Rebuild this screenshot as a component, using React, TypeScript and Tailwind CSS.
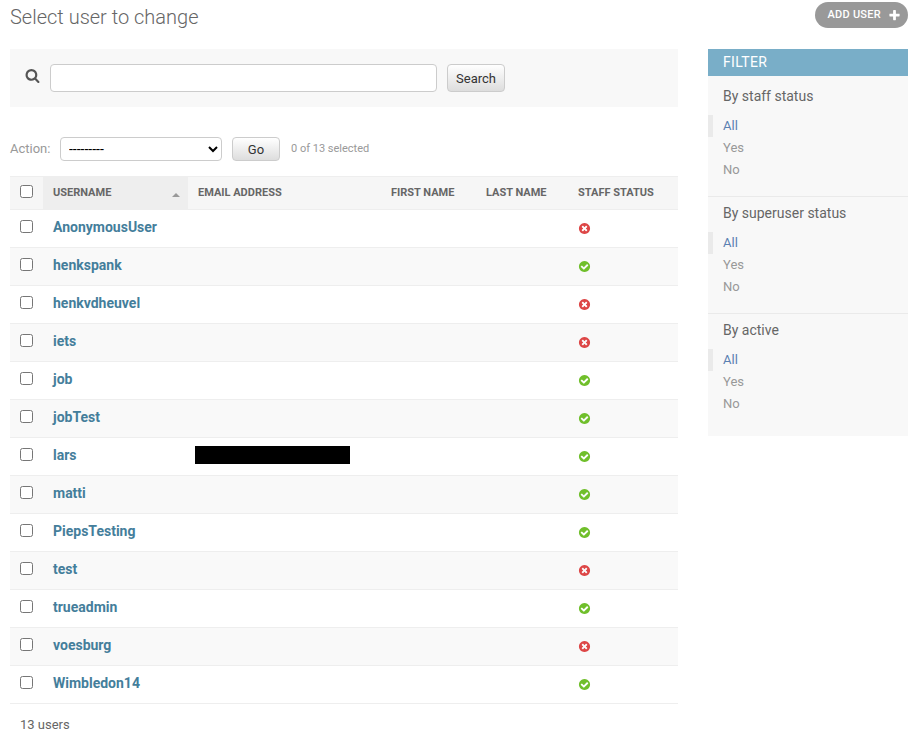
type User = { name: string; staff: boolean; redacted?: boolean };

const users: User[] = [
  { name: "AnonymousUser", staff: false },
  { name: "henkspank", staff: true },
  { name: "henkvdheuvel", staff: false },
  { name: "iets", staff: false },
  { name: "job", staff: true },
  { name: "jobTest", staff: true },
  { name: "lars", staff: true, redacted: true },
  { name: "matti", staff: true },
  { name: "PiepsTesting", staff: true },
  { name: "test", staff: false },
  { name: "trueadmin", staff: true },
  { name: "voesburg", staff: false },
  { name: "Wimbledon14", staff: true },
];

const filters = ["By staff status", "By superuser status", "By active"];
const choices = ["All", "Yes", "No"];

const DISC =
  "q0 209-103 385.5t-279.5 279.5-385.5 103-385.5-103-279.5-279.5-103-385.5 103-385.5 279.5-279.5 385.5-103 385.5 103 279.5 279.5 103 385.5z";
const YES =
  "M1412 734q0-28-18-46l-91-90q-19-19-45-19t-45 19l-408 407-226-226q-19-19-45-19t-45 19l-91 90q-18 18-18 46 0 27 18 45l362 362q19 19 45 19 27 0 46-19l543-543q18-18 18-45zm252 162" +
  DISC;
const NO =
  "M1277 1122q0-26-19-45l-181-181 181-181q19-19 19-45 0-27-19-46l-90-90q-19-19-46-19-26 0-45 19l-181 181-181-181q-19-19-45-19-27 0-46 19l-90 90q-19 19-19 46 0 26 19 45l181 181-181 181q-19 19-19 45 0 27 19 46l90 90q19 19 46 19 26 0 45-19l181-181 181 181q19 19 45 19 27 0 46-19l90-90q19-19 19-46zm387-226" +
  DISC;
const SEARCH =
  "M1216 832q0-185-131.5-316.5t-316.5-131.5-316.5 131.5-131.5 316.5 131.5 316.5 316.5 131.5 316.5-131.5 131.5-316.5zm512 832q0 52-38 90t-90 38q-54 0-90-38l-343-342q-179 124-399 124-143 0-273.5-55.5t-225-150-150-225-55.5-273.5 55.5-273.5 150-225 225-150 273.5-55.5 273.5 55.5 225 150 150 225 55.5 273.5q0 220-124 399l343 343q37 37 37 90z";
const PLUS =
  "M1600 736v192q0 40-28 68t-68 28h-416v416q0 40-28 68t-68 28h-192q-40 0-68-28t-28-68v-416h-416q-40 0-68-28t-28-68v-192q0-40 28-68t68-28h416v-416q0-40 28-68t68-28h192q40 0 68 28t28 68v416h416q40 0 68 28t28 68z";

function Icon({ path, className }: { path: string; className: string }) {
  return (
    <svg viewBox="0 0 1792 1792" fill="currentColor" className={className} aria-hidden="true">
      <path d={path} />
    </svg>
  );
}

const buttonClass =
  "rounded border border-[#ccc] bg-linear-to-b from-white to-[#ddd] pt-[2px] text-[13px] text-[#333]";
const thClass = "border-y border-[#eee] px-[10px] py-0 text-left font-bold whitespace-nowrap";
const tdClass = "h-[38px] border-b border-[#eee] px-[10px] py-0";

export default function App() {
  return (
    <div className="bg-white pr-2 pl-[10px] font-[Roboto,sans-serif] text-[13px] text-[#666]">
      <header className="flex items-start justify-between pt-[2px] pb-5">
        <h1 className="pt-1 text-[20px] leading-[23px] font-light">Select user to change</h1>
        <a
          href="#add"
          className="flex h-[26px] items-center gap-[7px] rounded-full bg-[#999] pr-[7px] pl-3 text-[11px] font-medium text-white"
        >
          <span className="tracking-wide">ADD USER</span>
          <Icon path={PLUS} className="size-[13px]" />
        </a>
      </header>

      <div className="flex items-start gap-[30px]">
        <main className="min-w-0 flex-1">
          <form
            className="flex h-[58px] items-center bg-[#f8f8f8] px-[15px]"
            onSubmit={(e) => e.preventDefault()}
          >
            <label htmlFor="searchbar" aria-label="Search users" className="mr-[10px] pb-[6px]">
              <Icon path={SEARCH} className="size-[15px] text-[#555]" />
            </label>
            <input
              id="searchbar"
              type="text"
              className="mr-[10px] h-7 w-[387px] rounded border border-[#ccc] bg-white px-[6px]"
            />
            <button type="submit" className={`${buttonClass} h-7 w-[58px]`}>
              Search
            </button>
          </form>

          <div className="flex items-center pt-[30px] pb-[15px]">
            <label htmlFor="action" className="w-[50px] text-[#999]">
              Action:
            </label>
            <select
              id="action"
              className="h-6 w-[162px] rounded border border-[#ccc] bg-white px-1 text-[14px] text-black"
            >
              <option>---------</option>
            </select>
            <button type="button" className={`${buttonClass} ml-[10px] h-6 w-12`}>
              Go
            </button>
            <span className="ml-[11px] text-[11px] text-[#999]">0 of 13 selected</span>
          </div>

          <table className="w-full table-fixed border-separate border-spacing-0">
            <colgroup>
              <col className="w-[33px]" />
              <col className="w-[145px]" />
              <col />
              <col className="w-[95px]" />
              <col className="w-[92px]" />
              <col className="w-[110px]" />
            </colgroup>
            <thead>
              <tr className="h-[34px] bg-[#f6f6f6] text-[11px]">
                <th className={thClass}>
                  <input type="checkbox" aria-label="Select all users" className="mb-1 block size-[13px]" />
                </th>
                <th className={`${thClass} bg-[#eee]`}>
                  <div className="flex items-center justify-between">
                    <a href="#username">USERNAME</a>
                    <svg viewBox="0 0 8 4" className="mt-1 -mr-[2px] h-1 w-2" aria-hidden="true">
                      <path d="M4 0l4 4H0z" fill="#999" />
                    </svg>
                  </div>
                </th>
                <th className={thClass}>
                  <a href="#email">EMAIL ADDRESS</a>
                </th>
                <th className={thClass}>
                  <a href="#first">FIRST NAME</a>
                </th>
                <th className={thClass}>
                  <a href="#last">LAST NAME</a>
                </th>
                <th className={thClass}>
                  <a href="#staff">STAFF STATUS</a>
                </th>
              </tr>
            </thead>
            <tbody>
              {users.map((u) => (
                <tr key={u.name} className="even:bg-[#f9f9f9]">
                  <td className={tdClass}>
                    <input type="checkbox" aria-label={`Select ${u.name}`} className="mb-1 block size-[13px]" />
                  </td>
                  <th scope="row" className={`${tdClass} pb-[3px] text-left text-[14px] font-bold`}>
                    <a href="#user" className="text-[#447e9b]">
                      {u.name}
                    </a>
                  </th>
                  <td className={tdClass}>
                    {u.redacted && <div className="mb-1 -ml-[3px] h-[18px] w-[155px] bg-black" />}
                  </td>
                  <td className={tdClass} />
                  <td className={tdClass} />
                  <td className={tdClass}>
                    <span role="img" aria-label={u.staff ? "True" : "False"} className="block">
                      <Icon
                        path={u.staff ? YES : NO}
                        className={u.staff ? "block size-[13px] text-[#70bf2b]" : "block size-[13px] text-[#dd4646]"}
                      />
                    </span>
                  </td>
                </tr>
              ))}
            </tbody>
          </table>
          <p className="px-[10px] py-3 leading-[18px]">13 users</p>
        </main>

        <aside className="w-[200px] shrink-0 bg-[#f8f8f8]">
          <h2 className="h-[27px] bg-[#79aec8] px-[15px] text-[14px] leading-[27px] tracking-wide text-white">
            FILTER
          </h2>
          <div className="pt-1 pb-[6px]">
            {filters.map((title) => (
              <section key={title} className="border-b border-[#eaeaea] pt-2 pb-[15px] last:border-b-0">
                <h3 className="mb-[11px] px-[15px] text-[14px] leading-4">{title}</h3>
                <ul>
                  {choices.map((c) => (
                    <li
                      key={c}
                      className="h-[22px] border-l-[5px] border-transparent pl-[10px] leading-[22px] text-[#999] first:border-[#eaeaea] first:text-[#5b80b2]"
                    >
                      <a href="#filter">{c}</a>
                    </li>
                  ))}
                </ul>
              </section>
            ))}
          </div>
        </aside>
      </div>
    </div>
  );
}
